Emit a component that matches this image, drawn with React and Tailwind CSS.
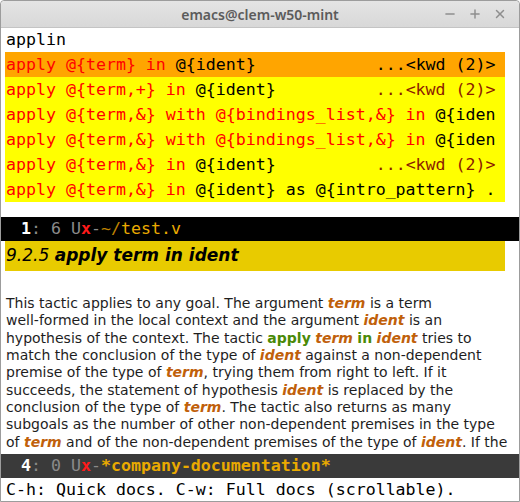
import React from 'react';
import { Minus, Plus, X } from 'lucide-react';

const mono = { fontFamily: '"DejaVu Sans Mono", monospace' };

// company popup candidates: [matched (red), rest (black), annotation]
const candidates = [
  { red: 'apply @{term} in', rest: ' @{ident}', pad: '            ', ann: '...<kwd (2)>', selected: true },
  { red: 'apply @{term,+} in', rest: ' @{ident}', pad: '          ', ann: '...<kwd (2)>' },
  { red: 'apply @{term,&} with @{bindings_list,&} in', rest: ' @{iden', pad: '', ann: '' },
  { red: 'apply @{term,&} with @{bindings_list,&} in', rest: ' @{iden', pad: '', ann: '' },
  { red: 'apply @{term,&} in', rest: ' @{ident}', pad: '          ', ann: '...<kwd (2)>' },
  { red: 'apply @{term,&} in', rest: ' @{ident} as @{intro_pattern} .', pad: '', ann: '' },
];

const Arg = ({ children }) => (
  <span className="font-bold italic text-[#c0600a]">{children}</span>
);
const Kw = ({ children }) => (
  <span className="font-bold text-[#4a8a06]">{children}</span>
);

const TitleBar = () => (
  <div className="h-[27px] shrink-0 flex items-center relative bg-gradient-to-b from-[#e4e4e4] to-[#d8d8d8] border-b border-[#c4c4c4] rounded-t-[4px]">
    <div
      className="flex-1 text-center text-[14px] font-semibold text-[#5b5b5b]"
      style={{ fontFamily: '"Noto Sans", sans-serif' }}
    >
      emacs@clem-w50-mint
    </div>
    <div className="absolute right-[12px] top-[6px] flex items-center gap-[11px] text-[#8e8e8e]">
      <Minus size={14} strokeWidth={2.5} />
      <Plus size={14} strokeWidth={2.5} />
      <X size={14} strokeWidth={2.5} />
    </div>
  </div>
);

const ModeLine = ({ num, count, name, dark }) => (
  <div
    className={`h-[24px] shrink-0 flex items-center whitespace-pre text-[16.6px] ${dark ? 'bg-[#3a3a3a]' : 'bg-black'}`}
    style={mono}
  >
    <span className="text-white">  </span>
    <span className="text-white font-bold">{num}</span>
    <span className="text-[#8a8a8a]">: {count} U</span>
    <span className="text-[#ff1a1a] font-bold">x</span>
    <span className="text-[#8a8a8a]">-</span>
    {name === 'test.v' ? (
      <>
        <span className="text-[#c08400]">~/</span>
        <span className="text-[#eaaa00]">test.v</span>
      </>
    ) : (
      <span className="text-[#eaaa00] font-bold">{name}</span>
    )}
  </div>
);

export default function App() {
  return (
    <div className="w-[520px] h-[502px] flex flex-col bg-white border border-[#9c9c9c] overflow-hidden rounded-t-[4px]">
      <TitleBar />

      {/* coq buffer with company popup */}
      <div className="shrink-0 text-[16.6px] text-black whitespace-pre" style={mono}>
        <div className="h-[24px] pl-[5px] leading-[24px]">applin</div>
        <div className="ml-[4px] w-[500px]">
          {candidates.map((c, i) => (
            <div
              key={i}
              className={`h-[25px] leading-[25px] pl-[1px] ${c.selected ? 'bg-[#ffa500]' : 'bg-[#ffff00]'}`}
            >
              <span className="text-[#ff0000]">{c.red}</span>
              <span className="text-black">{c.rest}</span>
              <span>{c.pad}</span>
              <span className={c.selected ? 'text-black' : 'text-[#8b1a00]'}>{c.ann}</span>
            </div>
          ))}
        </div>
        <div className="h-[15px]" />
      </div>

      <ModeLine num="1" count="6" name="test.v" />

      {/* documentation buffer */}
      <div className="flex-1 overflow-hidden">
        <div
          className="ml-[4px] w-[500px] h-[30px] bg-[#e8cb00] pl-[1px] flex items-center text-[17px] text-black whitespace-pre"
          style={{ fontFamily: '"DejaVu Sans", sans-serif' }}
        >
          <span className="italic">9.2.5 </span>
          <span className="italic font-bold">apply term in ident</span>
        </div>
        <div
          className="pt-[24px] pl-[5px] text-[14px] leading-[17.33px] text-[#1e1e1e] whitespace-pre"
          style={{ fontFamily: '"DejaVu Sans", sans-serif' }}
        >
          <div>This tactic applies to any goal. The argument <Arg>term</Arg> is a term</div>
          <div>well-formed in the local context and the argument <Arg>ident</Arg> is an</div>
          <div>hypothesis of the context. The tactic <Kw>apply</Kw> <Arg>term</Arg> <Kw>in</Kw> <Arg>ident</Arg> tries to</div>
          <div>match the conclusion of the type of <Arg>ident</Arg> against a non-dependent</div>
          <div>premise of the type of <Arg>term</Arg>, trying them from right to left. If it</div>
          <div>succeeds, the statement of hypothesis <Arg>ident</Arg> is replaced by the</div>
          <div>conclusion of the type of <Arg>term</Arg>. The tactic also returns as many</div>
          <div>subgoals as the number of other non-dependent premises in the type</div>
          <div>of <Arg>term</Arg> and of the non-dependent premises of the type of <Arg>ident</Arg>. If the</div>
        </div>
      </div>

      <ModeLine num="4" count="0" name="*company-documentation*" dark />

      <div className="h-[23px] shrink-0 pl-[5px] leading-[23px] text-[16.6px] text-black whitespace-pre" style={mono}>
        C-h: Quick docs. C-w: Full docs (scrollable).
      </div>
    </div>
  );
}
